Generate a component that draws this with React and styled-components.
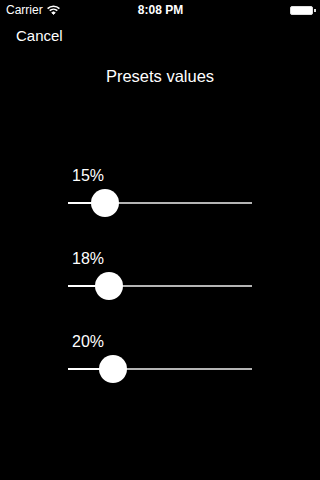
import React from 'react';
import styled, { createGlobalStyle } from 'styled-components';

const GlobalStyle = createGlobalStyle`
  body {
    margin: 0;
    background: #000;
  }
`;

const Screen = styled.div`
  width: 320px;
  height: 480px;
  background: #000;
  color: #fff;
  font-family: "Liberation Sans", Arial, sans-serif;
  overflow: hidden;
`;

const StatusBar = styled.div`
  display: grid;
  grid-template-columns: 1fr auto 1fr;
  align-items: center;
  height: 20px;
  padding: 0 5px 0 6px;
  font-size: 12px;
`;

const Carrier = styled.div`
  display: flex;
  align-items: center;
  gap: 4px;
`;

const Time = styled.div`
  font-weight: bold;
`;

const Battery = styled.div`
  justify-self: end;
  position: relative;
  width: 21px;
  height: 7px;
  margin-right: 2px;
  border: 1.5px solid #ddd;
  border-radius: 2px;
  background: #fff;

  &::after {
    content: '';
    position: absolute;
    right: -3.5px;
    top: 2px;
    width: 1.5px;
    height: 3px;
    background: #ddd;
  }
`;

const NavBar = styled.div`
  display: flex;
  align-items: center;
  height: 30px;
  padding-left: 16px;
  font-size: 15px;
`;

const Title = styled.h1`
  margin: 17px 0 0;
  text-align: center;
  font-size: 16.5px;
  font-weight: normal;
  line-height: 19px;
`;

const SliderList = styled.div`
  display: flex;
  flex-direction: column;
  gap: 32px;
  margin-top: 80px;
  padding-left: 68px;
`;

const SliderBlock = styled.div`
  width: 184px;
`;

const Label = styled.div`
  padding-left: 4px;
  font-size: 16px;
  line-height: 19px;
`;

const Track = styled.div`
  position: relative;
  height: 28px;
  margin-top: 4px;
  background: linear-gradient(to right, ${p => `#fff ${p.$fill}px, #b4b4b4 ${p.$fill}px`});
  background-size: 100% 2px;
  background-position: 0 center;
  background-repeat: no-repeat;
`;

const Thumb = styled.div`
  position: absolute;
  top: 0;
  width: 28px;
  height: 28px;
  border-radius: 50%;
  background: #fff;
`;

const WifiIcon = () => (
  <svg width="13" height="10" viewBox="0 0 13 10">
    <path d="M0.6 3.6 A8.5 8.5 0 0 1 12.4 3.6" stroke="#fff" strokeWidth="1.6" fill="none" />
    <path d="M2.7 5.7 A5.5 5.5 0 0 1 10.3 5.7" stroke="#fff" strokeWidth="1.6" fill="none" />
    <path d="M4.7 7.7 A2.6 2.6 0 0 1 8.3 7.7 L6.5 9.5 Z" fill="#fff" stroke="#fff" strokeWidth="0.8" />
  </svg>
);

const presets = [
  { label: '15%', position: 0.145 },
  { label: '18%', position: 0.17 },
  { label: '20%', position: 0.2 },
];

const THUMB = 28;
const TRACK = 184;

const Slider = ({ label, position }) => {
  const left = position * (TRACK - THUMB);
  return (
    <SliderBlock>
      <Label>{label}</Label>
      <Track $fill={left + THUMB / 2}>
        <Thumb style={{ left }} />
      </Track>
    </SliderBlock>
  );
};

export default function App() {
  return (
    <Screen>
      <GlobalStyle />
      <StatusBar>
        <Carrier>
          Carrier
          <WifiIcon />
        </Carrier>
        <Time>8:08 PM</Time>
        <Battery />
      </StatusBar>
      <NavBar>Cancel</NavBar>
      <Title>Presets values</Title>
      <SliderList>
        {presets.map(p => (
          <Slider key={p.label} label={p.label} position={p.position} />
        ))}
      </SliderList>
    </Screen>
  );
}
